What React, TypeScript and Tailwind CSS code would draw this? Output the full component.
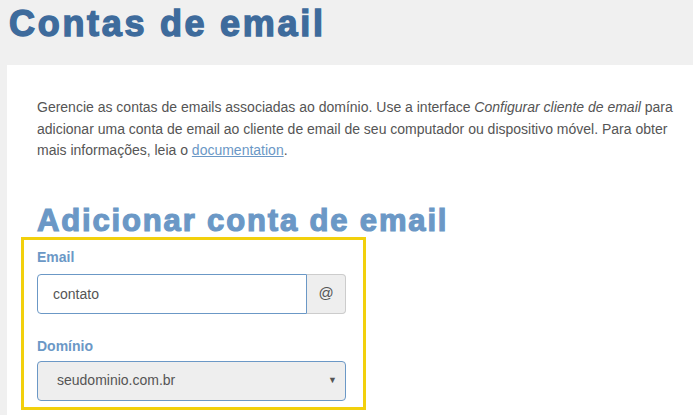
import React from 'react';

const App: React.FC = () => {
    return (
        <div className="min-h-screen bg-[#f0f0f0] font-['Liberation_Sans',Arial,sans-serif]">
            <h1 className="h-[65px] pl-[9px] pt-[6px] text-[36px] leading-[36px] font-bold tracking-[2.7px] text-[#3e6b9c] [-webkit-text-stroke:1.4px_#3e6b9c]">
                Contas de email
            </h1>
            <div className="ml-[7px] min-h-[350px] bg-white pl-[14px] pt-[32px] pb-[10px]">
                <p className="ml-[16px] text-[14px] leading-[21.5px] text-[#555555]">
                    Gerencie as contas de emails associadas ao domínio. Use a interface <em>Configurar cliente de email</em> para
                    <br />
                    adicionar uma conta de email ao cliente de email de seu computador ou dispositivo móvel. Para obter
                    <br />
                    mais informações, leia o{' '}
                    <a href="#" className="text-[#6b98c6] underline">
                        documentation
                    </a>
                    .
                </p>
                <h2 className="ml-[16px] mt-[43px] text-[31px] leading-[31px] font-bold tracking-[1.85px] text-[#6b98c6] [-webkit-text-stroke:1.2px_#6b98c6]">
                    Adicionar conta de email
                </h2>
                <div className="mt-[1px] w-[345px] border-[3px] border-[#f2d00c] pl-[13px] pr-[17px] pt-[7px] pb-[6px]">
                    <label className="block text-[14px] leading-[20px] font-bold text-[#6b98c6]">Email</label>
                    <div className="mt-[7px] flex h-[40px]">
                        <input
                            readOnly
                            value="contato"
                            className="h-full w-[270px] rounded-l-[4px] border border-[#6b98c6] bg-white pl-[15px] text-[14px] text-[#555555] outline-none"
                        />
                        <span className="flex h-full flex-1 items-center justify-center rounded-r-[4px] border border-l-0 border-[#cccccc] bg-[#eeeeee] text-[15px] text-[#555555]">
                            @
                        </span>
                    </div>
                    <label className="mt-[22px] block text-[14px] leading-[20px] font-bold text-[#6b98c6]">Domínio</label>
                    <div className="relative mt-[5px] h-[40px]">
                        <select
                            defaultValue="seudominio.com.br"
                            className="h-full w-full appearance-none rounded-[4px] border border-[#6b98c6] bg-[#eeeeee] pl-[19px] text-[14px] text-[#555555] outline-none"
                        >
                            <option>seudominio.com.br</option>
                        </select>
                        <span className="pointer-events-none absolute right-[9px] top-[13px] text-[9px] text-[#555555]">▼</span>
                    </div>
                </div>
            </div>
        </div>
    );
};

export default App;
